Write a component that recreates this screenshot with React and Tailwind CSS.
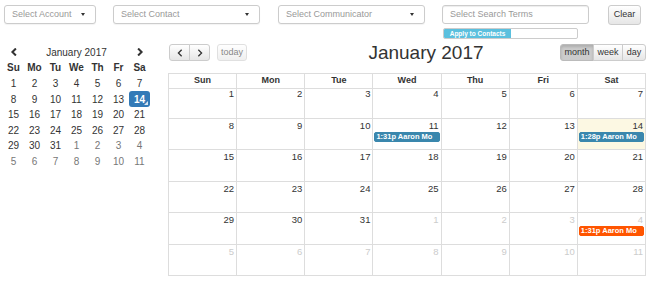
import React from 'react';

const font = { fontFamily: '"Liberation Sans", Arial, sans-serif' };

function Chevron({ dir, size = 8, stroke = 2.5 }) {
    return (
        <svg width={size} height={size} viewBox="0 0 10 10" fill="none" stroke="currentColor" strokeWidth={stroke} strokeLinecap="square">
            {dir === 'left' ? <path d="M6.5 1.5 L3 5 L6.5 8.5" /> : <path d="M3.5 1.5 L7 5 L3.5 8.5" />}
        </svg>
    );
}

function SelectBox({ label, width }) {
    return (
        <div
            className="h-[19px] flex items-center justify-between border border-[#ccc] rounded-[3px] bg-white pl-[7px] pr-[10px] shadow-[0_1px_1px_rgba(0,0,0,0.05)]"
            style={{ width }}
        >
            <span className="text-[9px] text-[#999]">{label}</span>
            <span className="w-0 h-0 border-l-[2.5px] border-r-[2.5px] border-t-[3px] border-l-transparent border-r-transparent border-t-[#333]" />
        </div>
    );
}

const miniWeeks = [
    [[1, 1], [2, 1], [3, 1], [4, 1], [5, 1], [6, 1], [7, 1]],
    [[8, 1], [9, 1], [10, 1], [11, 1], [12, 1], [13, 1], [14, 1]],
    [[15, 1], [16, 1], [17, 1], [18, 1], [19, 1], [20, 1], [21, 1]],
    [[22, 1], [23, 1], [24, 1], [25, 1], [26, 1], [27, 1], [28, 1]],
    [[29, 1], [30, 1], [31, 1], [1, 0], [2, 0], [3, 0], [4, 0]],
    [[5, 0], [6, 0], [7, 0], [8, 0], [9, 0], [10, 0], [11, 0]],
];

function MiniCalendar() {
    return (
        <div className="w-[147px] ml-[3px] text-[10px] text-[#333]">
            <div className="h-[16px] grid grid-cols-7 items-center">
                <span className="flex justify-center"><Chevron dir="left" /></span>
                <span className="col-span-5 text-center">January 2017</span>
                <span className="flex justify-center"><Chevron dir="right" /></span>
            </div>
            <div className="h-[15.6px] grid grid-cols-7 items-center font-bold">
                {['Su', 'Mo', 'Tu', 'We', 'Th', 'Fr', 'Sa'].map((d) => (
                    <span key={d} className="text-center">{d}</span>
                ))}
            </div>
            {miniWeeks.map((week, i) => (
                <div key={i} className="h-[15.6px] grid grid-cols-7 items-center">
                    {week.map(([n, cur], j) => {
                        const selected = cur && n === 14;
                        return (
                            <div key={j} className="flex justify-center">
                                {selected ? (
                                    <span className="relative w-[22px] h-[16px] flex items-center justify-center rounded-[3px] bg-[#337ab7] text-white font-bold">
                                        14
                                        <span className="absolute right-[2px] bottom-[2px] w-0 h-0 border-l-[4px] border-b-[4px] border-l-transparent border-b-white/80" />
                                    </span>
                                ) : (
                                    <span className={cur ? 'text-[#333]' : 'text-[#777]'}>{n}</span>
                                )}
                            </div>
                        );
                    })}
                </div>
            ))}
        </div>
    );
}

const bigWeeks = [
    [[1, 1], [2, 1], [3, 1], [4, 1], [5, 1], [6, 1], [7, 1]],
    [[8, 1], [9, 1], [10, 1], [11, 1, 'blue', '1:31p Aaron Mo'], [12, 1], [13, 1], [14, 1, 'blue', '1:28p Aaron Mo', true]],
    [[15, 1], [16, 1], [17, 1], [18, 1], [19, 1], [20, 1], [21, 1]],
    [[22, 1], [23, 1], [24, 1], [25, 1], [26, 1], [27, 1], [28, 1]],
    [[29, 1], [30, 1], [31, 1], [1, 0], [2, 0], [3, 0], [4, 0, 'orange', '1:31p Aaron Mo']],
    [[5, 0], [6, 0], [7, 0], [8, 0], [9, 0], [10, 0], [11, 0]],
];

const btn = 'h-[17px] flex items-center justify-center border border-[#ccc] bg-gradient-to-b from-white to-[#e6e6e6] text-[9px] text-[#333]';

function BigCalendar() {
    return (
        <div className="w-[478px]">
            <div className="h-[17px] flex items-center justify-between">
                <div className="flex items-center">
                    <div className="flex ml-[1px]">
                        <button className={`${btn} w-[21px] rounded-l-[3px]`}><Chevron dir="left" size={8} stroke={1.6} /></button>
                        <button className={`${btn} w-[21px] -ml-px rounded-r-[3px]`}><Chevron dir="right" size={8} stroke={1.6} /></button>
                    </div>
                    <button className={`${btn} w-[30px] ml-[7px] rounded-[3px] opacity-60`}>today</button>
                </div>
                <h2 className="text-[19px] text-[#333] leading-none ml-[45px]">January 2017</h2>
                <div className="flex">
                    <button className="h-[17px] w-[34px] flex items-center justify-center border border-[#bbb] rounded-l-[3px] bg-[#ccc] shadow-[inset_0_2px_3px_rgba(0,0,0,0.15)] text-[9px] text-[#333]">month</button>
                    <button className={`${btn} w-[30px] -ml-px`}>week</button>
                    <button className={`${btn} w-[24px] -ml-px rounded-r-[3px]`}>day</button>
                </div>
            </div>
            <div className="mt-[12px] border-l border-t border-[#ddd]">
                <div className="grid grid-cols-7 h-[13px]">
                    {['Sun', 'Mon', 'Tue', 'Wed', 'Thu', 'Fri', 'Sat'].map((d) => (
                        <div key={d} className="border-r border-b border-[#ddd] flex items-center justify-center text-[9px] font-bold text-[#333]">
                            {d}
                        </div>
                    ))}
                </div>
                {bigWeeks.map((week, i) => (
                    <div key={i} className="grid grid-cols-7 h-[31.5px]">
                        {week.map(([n, cur, color, title, today], j) => (
                            <div
                                key={j}
                                className={`border-r border-b border-[#ddd] flex flex-col overflow-hidden ${today ? 'bg-[#fcf8e3]' : ''}`}
                            >
                                <div className={`text-right pr-[2px] pt-[1px] text-[9.5px] leading-[12px] ${cur ? 'text-[#333]' : 'text-[#ccc]'}`}>
                                    {n}
                                </div>
                                {title && (
                                    <div
                                        className={`mx-[1px] h-[10px] flex items-center px-[1px] rounded-[2px] border text-[7.5px] font-bold text-white whitespace-nowrap overflow-hidden ${color === 'blue' ? 'bg-[#3a87ad] border-[#3a87ad]' : 'bg-[#ff5500] border-[#ff5500]'}`}
                                    >
                                        {title}
                                    </div>
                                )}
                            </div>
                        ))}
                    </div>
                ))}
            </div>
        </div>
    );
}

export default function App() {
    return (
        <div className="w-[657px] h-[288px] bg-white overflow-hidden" style={font}>
            <div className="h-[44px] pt-[5px] pl-[4px] flex items-start">
                <SelectBox label="Select Account" width={92} />
                <div className="ml-[17px]"><SelectBox label="Select Contact" width={147} /></div>
                <div className="ml-[18px]"><SelectBox label="Select Communicator" width={147} /></div>
                <div className="ml-[17px] w-[147px]">
                    <div className="h-[19px] flex items-center border border-[#ccc] rounded-[3px] pl-[7px] text-[9px] text-[#999] shadow-[inset_0_1px_1px_rgba(0,0,0,0.075)]">
                        Select Search Terms
                    </div>
                    <div className="mt-[4px] ml-[1px] w-[135px] h-[11px] border border-[#ccc] rounded-[2px] bg-white overflow-hidden flex">
                        <div className="w-[67px] h-full bg-[#5bc0de] flex items-center justify-center text-[6.5px] font-bold text-white whitespace-nowrap">
                            Apply to Contacts
                        </div>
                    </div>
                </div>
                <button className="ml-[19px] h-[20px] w-[33px] flex items-center justify-center rounded-[3px] border border-[#ccc] bg-gradient-to-b from-white to-[#e6e6e6] text-[9px] text-[#333]">
                    Clear
                </button>
            </div>
            <div className="flex">
                <MiniCalendar />
                <div className="ml-[18px]">
                    <BigCalendar />
                </div>
            </div>
        </div>
    );
}
